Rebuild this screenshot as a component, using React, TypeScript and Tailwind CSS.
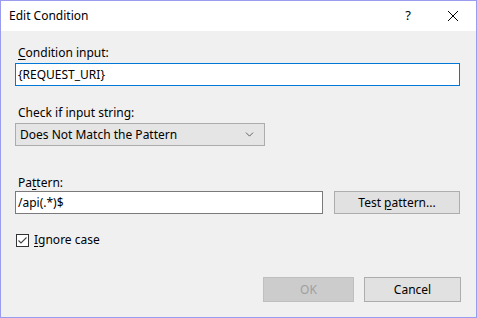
import { ChevronDown } from 'lucide-react'

const font = { fontFamily: '"Noto Sans", "Segoe UI", sans-serif' }

export default function App() {
  return (
    <div
      className="w-[477px] h-[318px] border border-[#9a9cf0] bg-[#f0f0f0] flex flex-col text-[12px] text-black"
      style={font}
    >
      {/* title bar */}
      <div className="h-[30px] bg-white flex items-center shrink-0">
        <span className="ml-[8px] text-[12px]">Edit Condition</span>
        <span className="ml-auto text-[13px] mr-[36px]">?</span>
        <svg width="12" height="12" viewBox="0 0 12 12" className="mr-[17px]">
          <path d="M1 1 L11 11 M11 1 L1 11" stroke="#000" strokeWidth="1" />
        </svg>
      </div>

      <div className="flex flex-col pl-[14px] pt-[13px]">
        <label className="h-[17px] leading-[17px] ml-[3px]">
          <span className="underline underline-offset-2">C</span>ondition input:
        </label>
        <div className="mt-[2px] w-[445px] h-[23px] border border-[#0078d7] bg-white flex items-center px-[2px]">
          {'{REQUEST_URI}'}
        </div>

        <label className="mt-[18px] h-[17px] leading-[17px] ml-[3px]">Check if input string:</label>
        <div className="mt-[2px] w-[250px] h-[23px] border border-[#acacac] bg-[#e5e5e5] flex items-center pl-[4px] pr-[8px]">
          <span>Does Not Match the Pattern</span>
          <ChevronDown size={13} strokeWidth={1.5} className="ml-auto text-[#444]" />
        </div>

        <label className="mt-[28px] h-[17px] leading-[17px] ml-[3px]">
          Pa<span className="underline underline-offset-2">t</span>tern:
        </label>
        <div className="flex gap-[11px]">
          <div className="w-[308px] h-[23px] border border-[#7a7a7a] bg-white flex items-center px-[2px]">
            /api(.*)$
          </div>
          <button className="w-[126px] h-[23px] border border-[#adadad] bg-[#e1e1e1]">
            Test <span className="underline underline-offset-2">p</span>attern...
          </button>
        </div>

        <div className="flex items-center mt-[17px] ml-[1px]">
          <div className="w-[13px] h-[13px] border border-[#333] bg-white flex items-center justify-center">
            <svg width="11" height="11" viewBox="0 0 11 11">
              <path d="M1.5 5.5 L4 8 L9.5 2.5" stroke="#444" strokeWidth="1.1" fill="none" />
            </svg>
          </div>
          <span className="ml-[5px]">
            <span className="underline underline-offset-2">I</span>gnore case
          </span>
        </div>

        <div className="flex mt-[28px] ml-[248px] gap-[10px]">
          <button className="w-[91px] h-[25px] border border-[#bfbfbf] bg-[#cccccc] text-[#a0a0a0]">OK</button>
          <button className="w-[97px] h-[25px] border border-[#adadad] bg-[#e1e1e1]">Cancel</button>
        </div>
      </div>
    </div>
  )
}
